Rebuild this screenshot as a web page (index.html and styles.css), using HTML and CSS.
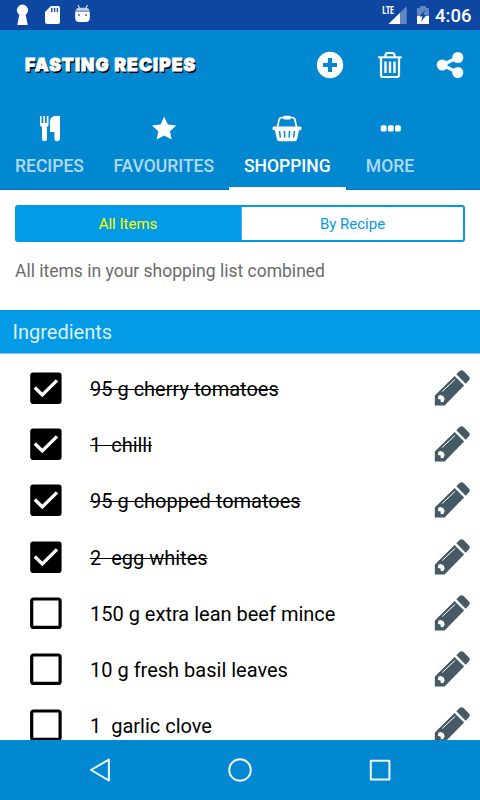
FILE: index.html
```
<!DOCTYPE html>
<html lang="en">
<head>
    <meta charset="UTF-8">
    <meta name="viewport" content="width=device-width, initial-scale=1.0">
    <title>Fasting Recipes</title>
    <link rel="stylesheet" href="styles.css">
</head>
<body>
    <svg class="sprite" width="0" height="0">
        <symbol id="checked" viewBox="0 0 32 32">
            <rect x="0.2" y="0.5" width="31.4" height="31.4" rx="3"/>
            <path d="M4.8 15.5l7.5 7.5L27 8.3" fill="none" stroke="#fff" stroke-width="3.3"/>
        </symbol>
        <symbol id="unchecked" viewBox="0 0 32 32">
            <rect x="1.7" y="2" width="28.4" height="28.4" rx="2" fill="none" stroke="#000" stroke-width="3.2"/>
        </symbol>
        <symbol id="pencil" viewBox="0 0 36 36">
            <path d="M.8 25.600L20.600 6l9.500 9.500L10.600 35.400H.8z"/>
            <path d="M22.400 4.300l3-3q2.200-2 4.400 0l4.900 4.900q2 2.200 0 4.400l-3.100 3.100z"/>
            <path d="M8.200 21.500L21 9.500" stroke="#fff" stroke-width="1"/>
            <path d="M4.300 25.800l2.200-.9 3 1.300 1.200 3-1.300 2.800-2.600.2-.2-2.600-2.600-.6z" fill="#fff"/>
        </symbol>
    </svg>

    <div class="status-bar">
        <svg width="100" height="30" viewBox="0 0 100 30" fill="#fff">
            <path d="M19.3 14.8a5.6 5.6 0 1 1 6.400 0l2 10.200H17.300z"/>
            <path d="M45 12l6-6h7q2 0 2 2v14q0 2-2 2H47q-2 0-2-2z"/>
            <path d="M51.8 8v4M54.6 8v4M57.4 8v4" stroke="#0d47a1" stroke-width="1.4"/>
            <path d="M75.2 11.5h14.6V18q0 4-4 4h-6.600q-4 0-4-4z"/>
            <path d="M75.5 10.8q.5-3 4-3h6q3.500 0 4 3z" opacity=".75"/>
            <path d="M79.5 8l-1.500-3M86 8l1.500-3" stroke="#fff" stroke-width="1"/>
            <path d="M78 14h2v2h-2zM85 14h2v2h-2z" fill="#6f8fc8"/>
        </svg>
        <div class="status-right">
            <span class="lte">LTE</span>
            <svg width="54" height="30" viewBox="0 0 54 30" fill="#fff">
                <path d="M18 12.7L24.7 6v18H18z" opacity=".35"/>
                <path d="M6.5 24L18 12.7V24z"/>
                <path d="M35 8h3V6h6v2h3v8H35z" opacity=".35"/>
                <path d="M35 16h12v8H35z"/>
                <path d="M43 10l-5.500 6.500h3L39 21.500l5.500-6.500h-3z" fill="#0d47a1"/>
            </svg>
            <span class="clock">4:06</span>
        </div>
    </div>

    <div class="header">
        <div class="toolbar">
            <h1 class="title">FASTING RECIPES</h1>
            <div class="actions">
                <svg width="28" height="28" viewBox="0 0 28 28">
                    <circle cx="14" cy="14" r="13.2" fill="#fff"/>
                    <path d="M14 7v14M7 14h14" stroke="#0288d1" stroke-width="4.2"/>
                </svg>
                <svg width="28" height="28" viewBox="0 0 28 28" fill="none" stroke="#fff">
                    <path d="M2.2 6.3h23.6" stroke-width="2"/>
                    <path d="M9 6l1-3.500Q10.500 2 11.500 2h5q1 0 1.500.5L19 6" stroke-width="2.2"/>
                    <path d="M5 6.500V24q0 2 2 2h14q2 0 2-2V6.500" stroke-width="2.2"/>
                    <path d="M9.500 10.500v11.500M14 10.500v11.500M18.500 10.500v11.500" stroke-width="2.4"/>
                </svg>
                <svg width="28" height="28" viewBox="0 0 28 28" fill="#fff">
                    <circle cx="6.2" cy="14" r="5.5"/>
                    <circle cx="21.8" cy="6.5" r="5.5"/>
                    <circle cx="21.8" cy="21.5" r="5.5"/>
                    <path d="M21.8 6.500L6.200 14l15.600 7.500" fill="none" stroke="#fff" stroke-width="3.2"/>
                </svg>
            </div>
        </div>
        <div class="tabs">
            <div class="tab tab-recipes">
                <svg width="30" height="28" viewBox="0 0 30 28" fill="#fff">
                    <path d="M5 2h1.500v7h1.800V2h1.700v7h1.800V2h1.700v9q-.2 1.500-1.500 2V25q0 2.200-2.500 2.200T7 25V13q-1.800-.6-2-2z"/>
                    <path d="M19.500 2H25v22.500q0 2.800-2.800 2.800T19.400 24.500V18H15V7q.3-4 4.500-5z"/>
                </svg>
                <span>RECIPES</span>
            </div>
            <div class="tab tab-favourites">
                <svg width="30" height="28" viewBox="0 0 30 28" fill="#fff">
                    <path d="M15.200 2.800l3.600 7.700 8.400 1-6.200 5.700 1.700 8.400-7.500-4.100-7.500 4.100 1.600-8.400L3 11.500l8.500-1z"/>
                </svg>
                <span>FAVOURITES</span>
            </div>
            <div class="tab tab-shopping active">
                <svg width="30" height="28" viewBox="0 0 30 28" fill="#fff">
                    <path d="M5.500 13L7 6q.6-2.500 3-2.500h10q2.400 0 3 2.500l1.500 7" fill="none" stroke="#fff" stroke-width="1.7"/>
                    <rect x="11" y="1.8" width="8" height="3.8" rx="1.5"/>
                    <path d="M1.500 12.500h27q1 .2 1 1.300v1.200q0 1-1 1.200h-1.400l-2.100 9.400q-.4 1.600-2 1.600H7q-1.600 0-2-1.600L2.900 16.200H1.500q-1-.2-1-1.200v-1.200q0-1.100 1-1.300z"/>
                    <path d="M7.500 17l.9 6.500M12.500 17l.3 6.500M17.500 17l-.3 6.500M22.500 17l-.9 6.500" stroke="#0288d1" stroke-width="1.5"/>
                </svg>
                <span>SHOPPING</span>
            </div>
            <div class="tab tab-more">
                <svg width="30" height="28" viewBox="0 0 30 28" fill="#fff">
                    <rect x="5.8" y="11.2" width="5.8" height="6.2" rx="1.5"/>
                    <rect x="12.9" y="11.2" width="5.8" height="6.2" rx="1.5"/>
                    <rect x="20" y="11.2" width="5.8" height="6.2" rx="1.5"/>
                </svg>
                <span>MORE</span>
            </div>
        </div>
    </div>

    <div class="filter">
        <div class="segmented">
            <div class="segment selected">All Items</div>
            <div class="segment">By Recipe</div>
        </div>
        <p class="description">All items in your shopping list combined</p>
    </div>

    <h2 class="section-title">Ingredients</h2>

    <div class="list">
        <div class="item done">
            <svg class="box"><use href="#checked"/></svg>
            <span class="item-name">95 g cherry tomatoes</span>
            <svg class="edit"><use href="#pencil"/></svg>
        </div>
        <div class="item done">
            <svg class="box"><use href="#checked"/></svg>
            <span class="item-name">1  chilli</span>
            <svg class="edit"><use href="#pencil"/></svg>
        </div>
        <div class="item done">
            <svg class="box"><use href="#checked"/></svg>
            <span class="item-name">95 g chopped tomatoes</span>
            <svg class="edit"><use href="#pencil"/></svg>
        </div>
        <div class="item done">
            <svg class="box"><use href="#checked"/></svg>
            <span class="item-name">2  egg whites</span>
            <svg class="edit"><use href="#pencil"/></svg>
        </div>
        <div class="item">
            <svg class="box"><use href="#unchecked"/></svg>
            <span class="item-name">150 g extra lean beef mince</span>
            <svg class="edit"><use href="#pencil"/></svg>
        </div>
        <div class="item">
            <svg class="box"><use href="#unchecked"/></svg>
            <span class="item-name">10 g fresh basil leaves</span>
            <svg class="edit"><use href="#pencil"/></svg>
        </div>
        <div class="item">
            <svg class="box"><use href="#unchecked"/></svg>
            <span class="item-name">1  garlic clove</span>
            <svg class="edit"><use href="#pencil"/></svg>
        </div>
    </div>

    <div class="nav-bar">
        <svg width="28" height="28" viewBox="0 0 28 28">
            <path d="M5 14L22.900 3.500v21z"/>
        </svg>
        <svg width="28" height="28" viewBox="0 0 28 28">
            <circle cx="14" cy="14" r="10.8"/>
        </svg>
        <svg width="28" height="28" viewBox="0 0 28 28">
            <rect x="4.8" y="4.8" width="18.6" height="18.6"/>
        </svg>
    </div>
</body>
</html>
```
FILE: styles.css
```
* {
    box-sizing: border-box;
}

body {
    margin: 0;
    width: 480px;
    height: 800px;
    display: flex;
    flex-direction: column;
    overflow: hidden;
    background: #fff;
    font-family: Roboto, sans-serif;
    color: #000;
}

svg {
    display: block;
    flex-shrink: 0;
}

.sprite {
    position: absolute;
}

.status-bar {
    height: 30px;
    flex-shrink: 0;
    display: flex;
    justify-content: space-between;
    background: #0d47a1;
    color: #fff;
}

.status-right {
    display: flex;
    width: 98px;
}

/* the label overlaps the corner of the signal triangle */
.lte {
    width: 0;
    padding-top: 5px;
    font-family: "Open Sans", sans-serif;
    font-size: 10.5px;
    font-weight: bold;
    line-height: 11px;
    letter-spacing: -0.8px;
    transform: scaleX(0.75);
    transform-origin: left;
}

.clock {
    font-size: 18.5px;
    font-weight: 500;
    line-height: 32px;
    white-space: nowrap;
    margin-left: -1px;
}

.header {
    height: 160px;
    flex-shrink: 0;
    background: #0288d1;
    border-bottom: 1px solid #0277bd;
}

.toolbar {
    height: 70px;
    padding: 0 16px 0 25px;
    display: flex;
    align-items: center;
    justify-content: space-between;
}

.title {
    margin: 0;
    font-family: Inter, sans-serif;
    font-size: 17.5px;
    font-weight: 900;
    line-height: 70px;
    letter-spacing: 1.05px;
    white-space: nowrap;
    color: #fff;
    -webkit-text-stroke: 0.8px #fff;
    text-shadow: 1px 1px 0 #000, 1.5px 1.5px 0 #000;
}

.actions {
    display: flex;
    gap: 32px;
}

.tabs {
    height: 90px;
    display: flex;
}

.tab {
    height: 90px;
    padding-top: 14px;
    display: flex;
    flex-direction: column;
    align-items: center;
    font-size: 17.5px;
    font-weight: 500;
    line-height: 48px;
    color: rgba(255, 255, 255, 0.7);
}

.tab-recipes {
    width: 99px;
}

.tab-favourites {
    width: 129.5px;
}

.tab-shopping {
    width: 117.5px;
}

.tab-more {
    width: 88px;
}

.tab.active {
    color: #fff;
    border-bottom: 3px solid #fff;
}

.filter {
    height: 120px;
    flex-shrink: 0;
    padding: 15px 15px 0;
}

.segmented {
    height: 37px;
    display: flex;
    border: 2px solid #039be5;
    border-radius: 3px;
}

.segment {
    flex: 1;
    font-size: 15px;
    line-height: 35px;
    text-align: center;
    color: #039be5;
}

.segment.selected {
    flex: 0 0 225px;
    padding-right: 2px;
    border-right: 1px solid #45b4eb;
    background: #039be5;
    color: #ffff00;
}

.description {
    margin: 18px 0 0;
    font-size: 17.5px;
    line-height: 22px;
    color: #6b6b6b;
}

.section-title {
    height: 44px;
    flex-shrink: 0;
    margin: 0;
    padding-left: 12.5px;
    background: #039be5;
    border-bottom: 1px solid #7fbce6;
    color: #dff2fc;
    font-size: 20px;
    font-weight: 400;
    line-height: 44px;
}

.list {
    flex: 1;
    min-height: 0;
    padding-top: 6px;
    overflow: hidden;
}

.item {
    height: 56.2px;
    padding: 0 10px 0 30px;
    display: flex;
    align-items: center;
}

.item-name {
    flex: 1;
    padding: 2px 0 0 28px;
    font-size: 20px;
    line-height: 30px;
    white-space: pre;
}

.done .item-name {
    text-decoration: line-through;
    text-decoration-thickness: 1px;
}

.box {
    width: 32px;
    height: 32px;
}

.edit {
    width: 36px;
    height: 36px;
    fill: #455a64;
}

.nav-bar {
    height: 60px;
    flex-shrink: 0;
    padding: 0 86px;
    display: flex;
    align-items: center;
    justify-content: space-between;
    background: #0288d1;
}

.nav-bar svg {
    fill: none;
    stroke: #f2f9fd;
    stroke-width: 2;
    stroke-linejoin: round;
}
```
